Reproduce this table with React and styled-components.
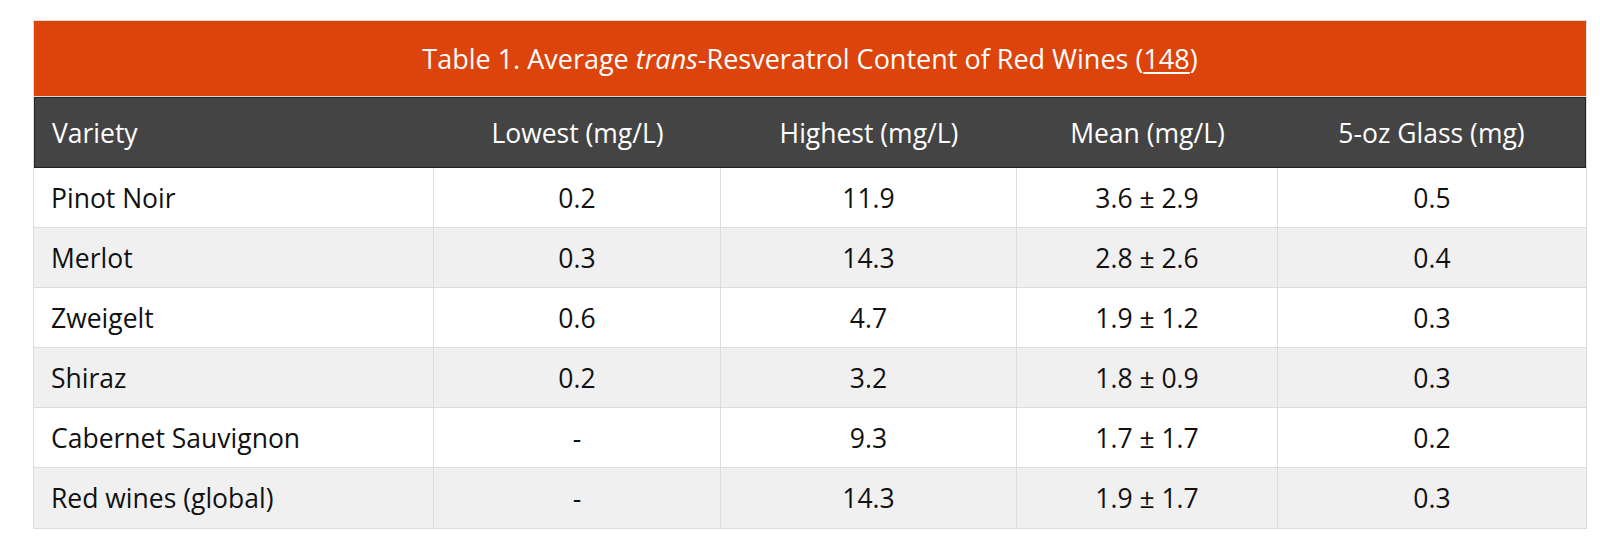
import React from 'react';
import styled, { createGlobalStyle } from 'styled-components';

const GlobalStyle = createGlobalStyle`
  html, body {
    margin: 0;
    padding: 0;
    background: #ffffff;
  }
  body {
    font-family: "Open Sans", "Liberation Sans", sans-serif;
  }
`;

const Page = styled.div`
  padding: 20px 13px 0 33px;
`;

const Caption = styled.div`
  display: flex;
  align-items: center;
  justify-content: center;
  height: 75px;
  background-color: #dc440b;
  border: 1px solid #dddddd;
  color: #ffffff;
  font-size: 27px;
  line-height: 1;

  em {
    font-style: italic;
  }

  a {
    color: #ffffff;
    text-decoration: underline;
    text-underline-offset: 3px;
  }
`;

const Table = styled.table`
  width: 100%;
  table-layout: fixed;
  border-collapse: separate;
  border-spacing: 0;
  border: 1px solid #dddddd;
  border-top: none;
  font-size: 26.5px;
`;

const HeadCell = styled.th`
  box-sizing: border-box;
  width: ${props => props.width}px;
  height: 71px;
  padding: 0 17px;
  background-color: #444444;
  color: #ffffff;
  font-weight: 400;
  text-align: ${props => (props.left ? 'left' : 'center')};
  border-top: 1px solid #222222;
  border-bottom: 1px solid #222222;
  &:first-child {
    border-left: 1px solid #222222;
  }
  &:last-child {
    border-right: 1px solid #222222;
  }
`;

const Row = styled.tr`
  background-color: ${props => (props.odd ? '#f0f0f0' : '#ffffff')};
`;

const Cell = styled.td`
  box-sizing: border-box;
  height: 60px;
  padding: 0 17px;
  color: #111111;
  text-align: ${props => (props.left ? 'left' : 'center')};
  border-right: 1px solid #dddddd;
  border-bottom: 1px solid #dddddd;
  &:last-child {
    border-right: none;
  }
  tr:last-child > & {
    border-bottom: none;
  }
`;

const columns = [
  { label: 'Variety', width: 400, left: true },
  { label: 'Lowest (mg/L)', width: 287 },
  { label: 'Highest (mg/L)', width: 296 },
  { label: 'Mean (mg/L)', width: 261 },
  { label: '5-oz Glass (mg)', width: 308 },
];

const wines = [
  ['Pinot Noir', '0.2', '11.9', '3.6 ± 2.9', '0.5'],
  ['Merlot', '0.3', '14.3', '2.8 ± 2.6', '0.4'],
  ['Zweigelt', '0.6', '4.7', '1.9 ± 1.2', '0.3'],
  ['Shiraz', '0.2', '3.2', '1.8 ± 0.9', '0.3'],
  ['Cabernet Sauvignon', '-', '9.3', '1.7 ± 1.7', '0.2'],
  ['Red wines (global)', '-', '14.3', '1.9 ± 1.7', '0.3'],
];

export default function App() {
  return (
    <Page>
      <GlobalStyle />
      <Caption>
        <span>
          Table 1. Average <em>trans</em>-Resveratrol Content of Red Wines (
          <a href="#ref-148">148</a>)
        </span>
      </Caption>
      <Table>
        <thead>
          <tr>
            {columns.map(col => (
              <HeadCell key={col.label} width={col.width} left={col.left}>
                {col.label}
              </HeadCell>
            ))}
          </tr>
        </thead>
        <tbody>
          {wines.map((wine, i) => (
            <Row key={wine[0]} odd={i % 2 === 1}>
              {wine.map((value, j) => (
                <Cell key={j} left={j === 0}>
                  {value}
                </Cell>
              ))}
            </Row>
          ))}
        </tbody>
      </Table>
    </Page>
  );
}
